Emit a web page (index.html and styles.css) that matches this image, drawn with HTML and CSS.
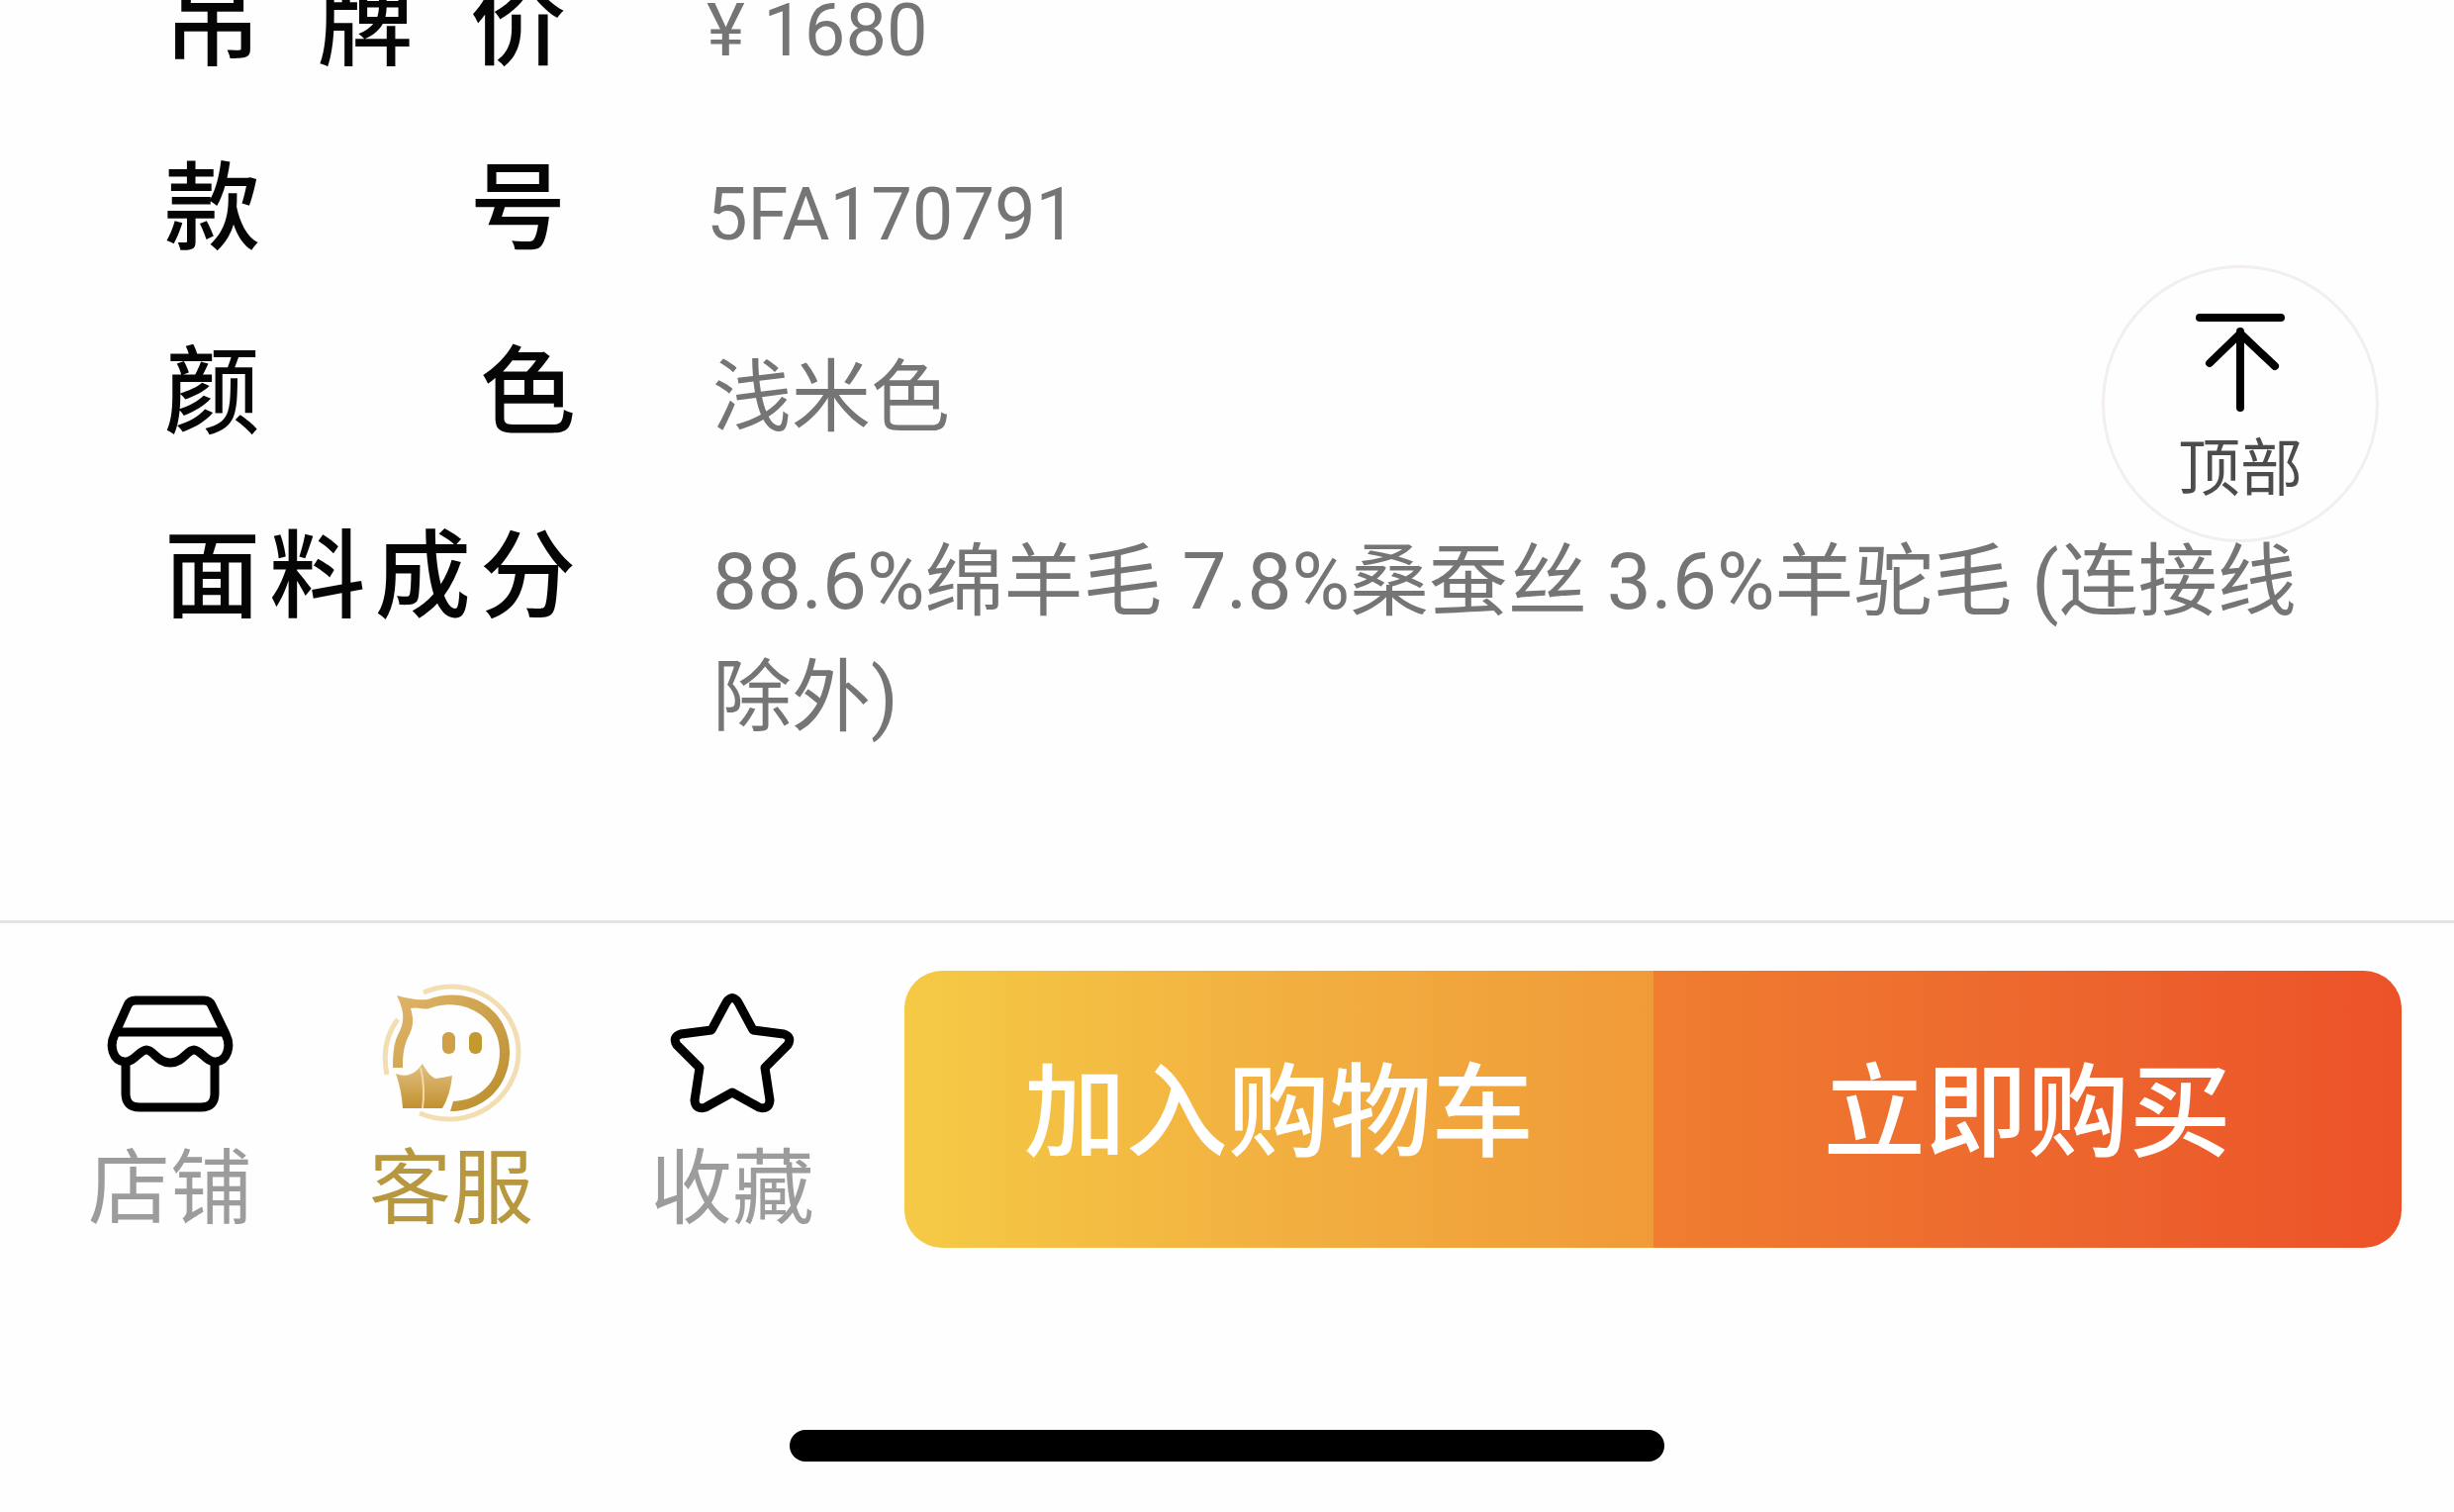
FILE: index.html
```html
<!DOCTYPE html>
<html lang="zh-CN">
<head>
<meta charset="utf-8">
<meta name="viewport" content="width=device-width, initial-scale=1">
<title>商品详情</title>
<link rel="stylesheet" href="styles.css">
</head>
<body>
<main class="detail">
  <dl class="specs">
    <div class="spec">
      <dt class="spec-label">吊牌价</dt>
      <dd class="spec-value spec-value-code">¥ 1680</dd>
    </div>
    <div class="spec">
      <dt class="spec-label">款号</dt>
      <dd class="spec-value spec-value-code">5FA170791</dd>
    </div>
    <div class="spec">
      <dt class="spec-label spec-label-wide">颜色</dt>
      <dd class="spec-value">浅米色</dd>
    </div>
    <div class="spec">
      <dt class="spec-label spec-label-wide">面料成分</dt>
      <dd class="spec-value">88.6%绵羊毛 7.8%桑蚕丝 3.6%羊驼毛 (连接线除外)</dd>
    </div>
  </dl>
  <button class="to-top" type="button">
    <svg class="to-top-icon" viewBox="0 0 96 104" aria-hidden="true">
      <path d="M7 6h82M48 20v77M17 52L48 22l35 33" fill="none" stroke="#000" stroke-width="8" stroke-linecap="round" stroke-linejoin="round"/>
    </svg>
    <span>顶部</span>
  </button>
</main>
<footer class="bar">
  <div class="bar-row">
    <nav class="tabs">
      <a class="tab" href="#shop">
        <svg class="tab-icon" viewBox="0 0 140 140" aria-hidden="true">
          <g fill="none" stroke="#000" stroke-width="9" stroke-linejoin="round">
            <path d="M35 15h69q6 0 8 5l14 29c6 12 2 27-10 28-9 1-15-12-22-12-7 0-11 13-24 13S53 65 46 65c-7 0-13 13-22 12C12 76 8 61 14 49l13-29q2-5 8-5z"/>
            <path d="M17 47h106M25 77v32q0 14 14 14h62q14 0 14-14V77"/>
          </g>
        </svg>
        <span>店铺</span>
      </a>
      <a class="tab tab-gold" href="#service">
        <svg class="tab-icon" viewBox="0 0 140 140" aria-hidden="true">
          <defs>
            <linearGradient id="gold" x1="0" y1="0" x2="1" y2="1">
              <stop offset="0" stop-color="#e0b56c"/>
              <stop offset="1" stop-color="#b98d2a"/>
            </linearGradient>
            <linearGradient id="crown" x1="0" y1="0" x2="0" y2="1">
              <stop offset="0" stop-color="#e2c083"/>
              <stop offset="1" stop-color="#c2912f"/>
            </linearGradient>
          </defs>
          <path d="M42 7C88-13 138 20 138 67c0 46-48 83-100 62M16 34C4 50 1 70 5 90" fill="none" stroke="#f3deb2" stroke-width="5"/>
          <path d="M15 10c12 3 20 5 31 4C92-2 129 27 129 67c0 36-27 60-60 60l3-10c26-1 47-19 47-50C119 32 82 10 48 23c-6 2-12-2-19 0 4 14 2 20-3 30-4 9-5 17-5 30H11c0-14 1-26 6-35 5-10 7-20-2-38z" fill="url(#gold)"/>
          <rect x="61" y="47" width="13" height="22" rx="6" fill="#cfa047"/>
          <rect x="88" y="47" width="13" height="22" rx="6" fill="#c29a30"/>
          <path d="M14 89q12 5 22-4l5-6q6 12 13 15 8-1 17-3-2 20-10 33H21q-1-18-7-35z" fill="url(#crown)"/>
          <path d="M39 83q5 20 2 41" fill="none" stroke="#f1d9a7" stroke-width="2"/>
        </svg>
        <span>客服</span>
      </a>
      <a class="tab" href="#favorite">
        <svg class="tab-icon" viewBox="0 0 140 140" aria-hidden="true">
          <path d="M64 17q6-9 12 0l15 28 31 4q9 3 4 11L103 83l5 33q-1 10-11 7L70 108 43 123q-10 3-11-7l5-33L14 60q-5-8 4-11l31-4z" fill="none" stroke="#000" stroke-width="9" stroke-linejoin="round"/>
        </svg>
        <span>收藏</span>
      </a>
    </nav>
    <div class="actions">
      <button class="action action-cart" type="button">加入购物车</button>
      <button class="action action-buy" type="button">立即购买</button>
    </div>
  </div>
  <div class="home-indicator"></div>
</footer>
</body>
</html>
```
FILE: styles.css
```css
* {
  box-sizing: border-box;
}

body {
  margin: 0;
  min-height: 100vh;
  display: flex;
  flex-direction: column;
  overflow: hidden;
  background: #fefefe;
  font-family: Roboto, "Noto Sans CJK SC", sans-serif;
}

button {
  border: 0;
  padding: 0;
  font-family: inherit;
}

.detail {
  position: relative;
  flex: 1;
}

/* The list is scrolled so that its first row is cut by the top edge. */
.specs {
  display: flex;
  flex-direction: column;
  gap: 66px;
  margin: -43px 0 0;
  padding: 0 120px 0 166px;
}

.spec {
  display: flex;
  align-items: flex-start;
  height: 120px;
}

.spec-label {
  width: 406px;
  margin-right: 142px;
  flex: none;
  font-family: "Noto Sans CJK SC", sans-serif;
  font-size: 97px;
  font-weight: 500;
  line-height: 118px;
  text-align: justify;
  text-align-last: justify;
  color: #050505;
}

.spec-label-wide {
  width: 416px;
  margin-right: 138px;
}

.spec-value {
  margin: 0;
  padding-top: 15px;
  font-size: 80px;
  font-weight: 400;
  line-height: 117px;
  color: #757575;
}

.spec-value-code {
  font-size: 74px;
}

.to-top {
  position: absolute;
  top: 268px;
  right: 76px;
  width: 280px;
  height: 280px;
  display: flex;
  flex-direction: column;
  align-items: center;
  padding-top: 44px;
  border: 3px solid #f3eef0;
  border-radius: 50%;
  background: #fefefe;
  color: #4c4c4c;
  font-size: 63px;
  line-height: 80px;
}

.to-top-icon {
  width: 96px;
  height: 104px;
  margin-bottom: 15px;
}

.bar {
  border-top: 3px solid #e4e4e4;
  padding: 48px 0 51px;
}

.bar-row {
  display: flex;
  gap: 32px;
  padding: 0 53px 0 30px;
}

.tabs {
  display: flex;
}

.tab {
  width: 284px;
  display: flex;
  flex-direction: column;
  align-items: center;
  padding-top: 15px;
  color: #9c9c9c;
  font-family: "Noto Sans CJK SC", sans-serif;
  font-size: 83px;
  font-weight: 400;
  line-height: 100px;
  text-decoration: none;
}

.tab-gold {
  color: #b8983f;
}

.tab-icon {
  width: 140px;
  height: 140px;
  margin-bottom: 8px;
  overflow: visible;
}

.actions {
  flex: 1;
  height: 280px;
  display: flex;
  border-radius: 38px;
  overflow: hidden;
}

.action {
  flex: 1;
  padding-bottom: 10px;
  color: #fff;
  font-size: 103px;
  font-weight: 500;
}

.action-cart {
  background: linear-gradient(90deg, #f5ca45, #f2b040 50%, #f09a38);
}

.action-buy {
  background: linear-gradient(90deg, #f07e30, #ed682e 50%, #ec5228);
}

.home-indicator {
  width: 884px;
  height: 32px;
  margin: 184px auto 0;
  border-radius: 16px;
  background: #000;
}
```
